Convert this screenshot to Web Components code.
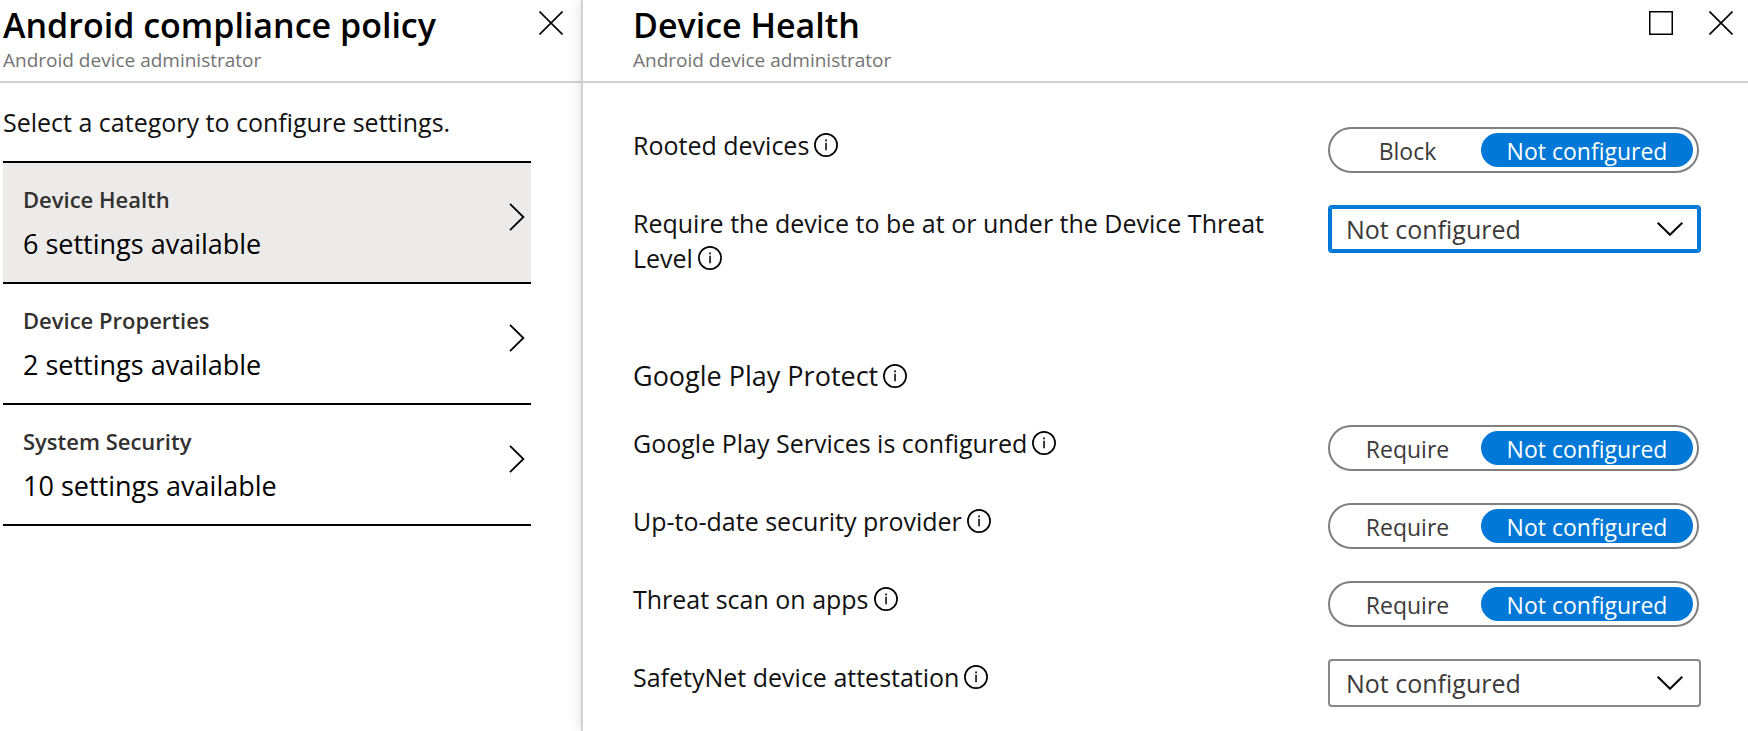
<!DOCTYPE html>
<html lang="en">
<head>
<meta charset="utf-8">
<title>Android compliance policy</title>
<style>
    body {
        margin: 0;
        background: #fff;
        color: #111;
        font-family: "Segoe UI", "Open Sans", "Noto Sans", sans-serif;
        font-size: 25px;
        line-height: 35px;
    }
</style>
</head>
<body>

<blade-shell>
    <blade-panel heading="Android compliance policy" subheading="Android device administrator">
        <category-list>
            <span slot="intro">Select a category to configure settings.</span>
            <category-item selected>Device Health<span slot="count">6 settings available</span></category-item>
            <category-item>Device Properties<span slot="count">2 settings available</span></category-item>
            <category-item>System Security<span slot="count">10 settings available</span></category-item>
        </category-list>
    </blade-panel>
    <blade-panel class="detail" slot="detail" heading="Device Health" subheading="Android device administrator" maximizable>
        <settings-form>
            <setting-toggle option="Block">Rooted devices</setting-toggle>
            <setting-select active>Require the device to be at or under the Device Threat Level</setting-select>
            <setting-heading>Google Play Protect</setting-heading>
            <setting-toggle option="Require">Google Play Services is configured</setting-toggle>
            <setting-toggle option="Require">Up-to-date security provider</setting-toggle>
            <setting-toggle option="Require">Threat scan on apps</setting-toggle>
            <setting-select>SafetyNet device attestation</setting-select>
        </settings-form>
    </blade-panel>
</blade-shell>

<script>
// Attaches an open shadow root filled from a template
function render(host, html) {
    const template = document.createElement('template');
    template.innerHTML = html;
    const shadowRoot = host.attachShadow({mode: 'open'});
    shadowRoot.appendChild(template.content.cloneNode(true));
    return shadowRoot;
}

// Row layout shared by the toggle and select settings
const rowStyle = `
    :host {
        display: grid;
        grid-template-columns: minmax(0, 1fr) 373px;
        column-gap: 24px;
        align-items: start;
        min-height: 48px;
    }
    .caption {
        padding-top: 1px;
    }
`;

class BladeShell extends HTMLElement {
    connectedCallback() {
        render(this, `
            <style>
                :host {
                    display: grid;
                    grid-template-columns: 581px minmax(0, 1fr);
                    min-height: 100vh;
                    overflow: hidden;
                }
                ::slotted([slot="detail"]) {
                    --gutter: 50px;
                    --icon-inset: 15px;
                    position: relative;
                    border-left: 2px solid #d2d2d2;
                    box-shadow: 0 0 12px rgba(0, 0, 0, .14);
                }
            </style>
            <slot></slot>
            <slot name="detail"></slot>`);
    }
}

class BladePanel extends HTMLElement {
    connectedCallback() {
        const maximize = this.hasAttribute('maximizable') ? `
            <button type="button" aria-label="Maximize">
                <svg width="24" height="24" viewBox="0 0 24 24" fill="none" stroke="#000" stroke-width="1.5">
                    <rect x=".75" y=".75" width="22.5" height="22.5"/>
                </svg>
            </button>` : '';
        render(this, `
            <style>
                :host {
                    display: block;
                    background: #fff;
                }
                header {
                    display: flex;
                    justify-content: space-between;
                    padding: 3px var(--icon-inset, 18px) 8px var(--gutter, 3px);
                    border-bottom: 2px solid #d2d2d2;
                }
                h1 {
                    margin: 0;
                    color: #000;
                    font-size: 34px;
                    font-weight: 600;
                    line-height: 44px;
                }
                p {
                    margin: 0;
                    color: #737373;
                    font-size: 19px;
                    line-height: 26px;
                }
                .actions {
                    display: flex;
                    align-items: flex-start;
                    gap: 36px;
                    padding-top: 8px;
                }
                button {
                    display: block;
                    padding: 0;
                    border: 0;
                    background: none;
                    cursor: pointer;
                }
                svg {
                    display: block;
                }
            </style>
            <header>
                <div>
                    <h1>${this.getAttribute('heading')}</h1>
                    <p>${this.getAttribute('subheading')}</p>
                </div>
                <div class="actions">
                    ${maximize}
                    <button type="button" aria-label="Close">
                        <svg width="24" height="24" viewBox="0 0 24 24" fill="none" stroke="#000" stroke-width="1.6">
                            <path d="M.5 .5l23 23M23.5 .5l-23 23"/>
                        </svg>
                    </button>
                </div>
            </header>
            <slot></slot>`);
    }
}

class CategoryList extends HTMLElement {
    connectedCallback() {
        render(this, `
            <style>
                :host {
                    display: block;
                    padding: 22px 50px 22px 3px;
                }
                p {
                    margin: 0 0 21px;
                }
                nav {
                    border-bottom: 2px solid #000;
                }
            </style>
            <p><slot name="intro"></slot></p>
            <nav><slot></slot></nav>`);
    }
}

class CategoryItem extends HTMLElement {
    connectedCallback() {
        render(this, `
            <style>
                :host {
                    display: block;
                    border-top: 2px solid #000;
                }
                :host([selected]) {
                    background: #ecebe9;
                }
                button {
                    display: flex;
                    justify-content: space-between;
                    align-items: flex-start;
                    width: 100%;
                    padding: 21px 6px 19px 20px;
                    border: 0;
                    background: none;
                    color: #000;
                    font: inherit;
                    text-align: left;
                    cursor: pointer;
                }
                .text {
                    display: grid;
                    gap: 11px;
                }
                .name {
                    color: #323130;
                    font-size: 22px;
                    font-weight: 600;
                    line-height: 30px;
                }
                .count {
                    font-size: 27px;
                    line-height: 38px;
                }
                svg {
                    margin-top: 19px;
                }
            </style>
            <button type="button">
                <span class="text">
                    <span class="name"><slot></slot></span>
                    <span class="count"><slot name="count"></slot></span>
                </span>
                <svg width="16" height="28" viewBox="0 0 16 28" fill="none" stroke="#000" stroke-width="1.8">
                    <path d="M1 .8l13.4 13.2L1 27.2"/>
                </svg>
            </button>`);
    }
}

class InfoButton extends HTMLElement {
    connectedCallback() {
        render(this, `
            <style>
                :host {
                    display: inline-block;
                    margin-left: 5px;
                    vertical-align: -2px;
                }
                button {
                    display: block;
                    padding: 0;
                    border: 0;
                    background: none;
                    cursor: pointer;
                }
                svg {
                    display: block;
                }
            </style>
            <button type="button" aria-label="More information">
                <svg width="24" height="24" viewBox="0 0 24 24">
                    <circle cx="12" cy="12" r="11.1" fill="none" stroke="#000" stroke-width="1.7"/>
                    <path d="M11.2 6.5h1.7v1.7h-1.7zM11.3 9.8h1.5v7.4h-1.5z"/>
                </svg>
            </button>`);
    }
}

class SettingsForm extends HTMLElement {
    connectedCallback() {
        render(this, `
            <style>
                :host {
                    display: block;
                    padding: 44px 47px 24px 50px;
                }
                form {
                    display: grid;
                    gap: 30px;
                }
            </style>
            <form><slot></slot></form>`);
    }
}

class SettingHeading extends HTMLElement {
    connectedCallback() {
        render(this, `
            <style>
                :host {
                    display: block;
                    margin-top: 51px;
                }
                h2 {
                    margin: 0;
                    font-size: 27px;
                    font-weight: 400;
                    line-height: 38px;
                }
            </style>
            <h2><slot></slot><info-button></info-button></h2>`);
    }
}

class SettingToggle extends HTMLElement {
    connectedCallback() {
        render(this, `
            <style>
                ${rowStyle}
                .toggle {
                    display: grid;
                    grid-template-columns: minmax(0, 1fr) 212px;
                    box-sizing: border-box;
                    margin-right: 2px;
                    padding: 4px;
                    border: 2px solid #7f7f7f;
                    border-radius: 23px;
                    color: #3b3a39;
                    font-size: 23px;
                    line-height: 32px;
                    text-align: center;
                }
                label {
                    position: relative;
                    padding-top: 2px;
                    border-radius: 17px;
                    cursor: pointer;
                }
                label:has(:checked) {
                    background: #0078d7;
                    color: #fff;
                }
                input {
                    position: absolute;
                    inset: 0;
                    width: 100%;
                    height: 100%;
                    margin: 0;
                    opacity: 0;
                }
            </style>
            <div class="caption"><span id="name"><slot></slot></span><info-button></info-button></div>
            <div class="toggle" role="radiogroup" aria-labelledby="name">
                <label><input type="radio" name="value">${this.getAttribute('option')}</label>
                <label><input type="radio" name="value" checked>Not configured</label>
            </div>`);
    }
}

class SettingSelect extends HTMLElement {
    connectedCallback() {
        render(this, `
            <style>
                ${rowStyle}
                .field {
                    display: grid;
                    align-items: center;
                }
                select, svg {
                    grid-area: 1 / 1;
                }
                select {
                    appearance: none;
                    box-sizing: border-box;
                    width: 100%;
                    height: 48px;
                    margin: 0;
                    padding: 0 48px 0 16px;
                    border: 2px solid #8a8886;
                    border-radius: 4px;
                    outline: 0;
                    background: #fff;
                    color: #3b3a39;
                    font: inherit;
                }
                select:focus, :host([active]) select {
                    border-color: #0078d7;
                    box-shadow: inset 0 0 0 2px #0078d7;
                }
                svg {
                    justify-self: end;
                    margin-right: 18px;
                    pointer-events: none;
                }
            </style>
            <div class="caption"><label for="value"><slot></slot></label><info-button></info-button></div>
            <div class="field">
                <select id="value"><option>Not configured</option></select>
                <svg width="26" height="14" viewBox="0 0 26 14" fill="none" stroke="#000" stroke-width="2">
                    <path d="M.7 .7L13 12.8 25.3 .7"/>
                </svg>
            </div>`);
    }
}

window.customElements.define('blade-shell', BladeShell);
window.customElements.define('blade-panel', BladePanel);
window.customElements.define('category-list', CategoryList);
window.customElements.define('category-item', CategoryItem);
window.customElements.define('info-button', InfoButton);
window.customElements.define('settings-form', SettingsForm);
window.customElements.define('setting-heading', SettingHeading);
window.customElements.define('setting-toggle', SettingToggle);
window.customElements.define('setting-select', SettingSelect);
</script>
</body>
</html>
